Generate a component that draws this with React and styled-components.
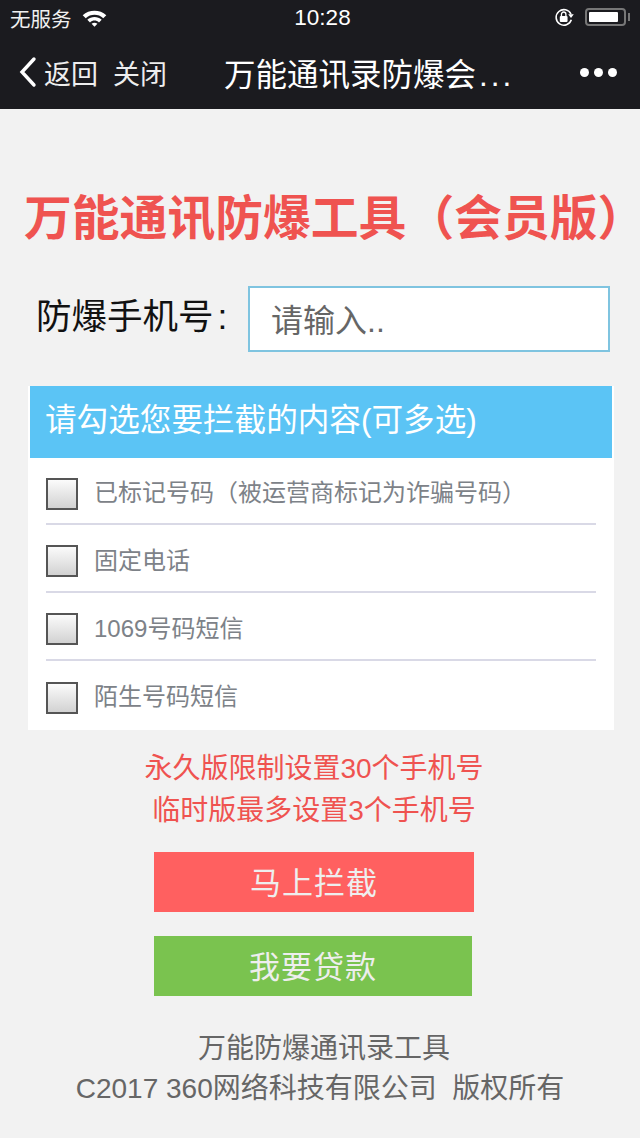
import React from "react";
import styled, { createGlobalStyle } from "styled-components";

const GlobalStyle = createGlobalStyle`
  html, body {
    margin: 0;
    padding: 0;
    background: #f2f2f2;
  }
  body {
    font-family: "Liberation Sans", "Noto Sans CJK SC", sans-serif;
  }
`;

const options = [
  "已标记号码（被运营商标记为诈骗号码）",
  "固定电话",
  "1069号码短信",
  "陌生号码短信",
];

const App = () => {
  return (
    <Page>
      <GlobalStyle />
      <Header>
        <StatusBar>
          <StatusLeft>
            无服务
            <svg width="25" height="18" viewBox="0 0 22 16">
              <path d="M.5 5.5C6.2 .2 15.8 .2 21.5 5.5L18.8 8.2C14.5 4.2 7.5 4.2 3.2 8.2Z" fill="#fff" />
              <path d="M4.6 9.5C8.2 6.2 13.8 6.2 17.4 9.5L15 11.9C12.6 9.8 9.4 9.8 7 11.9Z" fill="#fff" />
              <path d="M8.4 13.1C10 11.9 12 11.9 13.6 13.1L11 15.8Z" fill="#fff" />
            </svg>
          </StatusLeft>
          <Clock>10:28</Clock>
          <StatusRight>
            <svg width="20" height="20" viewBox="0 0 18 18">
              <path d="M15.3 6.5A7 7 0 1 0 15.6 11.5" fill="none" stroke="#fff" strokeWidth="1.4" />
              <path d="M12.8 6.5H17.8L15.3 10Z" fill="#fff" />
              <rect x="5.2" y="8" width="7" height="5.5" rx="1" fill="#fff" />
              <path d="M6.7 8V6.5A2 2 0 0 1 10.7 6.5V8" fill="none" stroke="#fff" strokeWidth="1.2" />
            </svg>
            <Battery>
              <BatteryFill />
            </Battery>
          </StatusRight>
        </StatusBar>
        <NavBar>
          <NavLeft>
            <svg width="20" height="32" viewBox="0 0 20 32">
              <path d="M16 3L4 16L16 29" fill="none" stroke="#fff" strokeWidth="3.4" strokeLinecap="round" />
            </svg>
            <NavLink>返回</NavLink>
            <CloseLink>关闭</CloseLink>
          </NavLeft>
          <NavTitle>
            万能通讯录防爆会<Ellipsis>...</Ellipsis>
          </NavTitle>
          <Dots>
            <Dot />
            <Dot />
            <Dot />
          </Dots>
        </NavBar>
      </Header>

      <Content>
        <Title>
          万能通讯防爆工具（会员版<TitleEnd>）</TitleEnd>
        </Title>
        <PhoneRow>
          <PhoneLabel>
            防爆手机号<Colon>:</Colon>
          </PhoneLabel>
          <PhoneInput placeholder="请输入.." />
        </PhoneRow>

        <Panel>
          <PanelHead>请勾选您要拦截的内容(可多选)</PanelHead>
          <OptionList>
            {options.map((text) => (
              <Option key={text}>
                <Check />
                <OptionText>{text}</OptionText>
              </Option>
            ))}
          </OptionList>
        </Panel>

        <Notice>
          永久版限制设置30个手机号
          <br />
          临时版最多设置3个手机号
        </Notice>

        <ActionButton $bg="#ff6060" $width={320}>马上拦截</ActionButton>
        <ActionButton $bg="#7ac34f" $width={318}>我要贷款</ActionButton>

        <Footer>
          <FooterLine $shift={8}>万能防爆通讯录工具</FooterLine>
          <FooterLine>C2017 360网络科技有限公司&nbsp;&nbsp;版权所有</FooterLine>
        </Footer>
      </Content>
    </Page>
  );
};

const Page = styled.div`
  width: 640px;
  height: 1138px;
  overflow: hidden;
  background: #f2f2f2;
`;

const Header = styled.header`
  height: 109px;
  background: #1b1b1f;
  color: #fff;
`;

const StatusBar = styled.div`
  height: 36px;
  padding: 0 10px;
  display: grid;
  grid-template-columns: 1fr auto 1fr;
  align-items: center;
  font-size: 20.5px;
`;

const StatusLeft = styled.div`
  display: flex;
  align-items: center;
  gap: 10px;
  color: #f0f0f0;
`;

const Clock = styled.div`
  font-size: 22.5px;
  margin-left: 5px;
`;

const StatusRight = styled.div`
  display: flex;
  justify-content: flex-end;
  align-items: center;
  gap: 11px;
  padding: 0 4px 2px 0;
`;

const Battery = styled.div`
  position: relative;
  width: 41px;
  height: 18px;
  box-sizing: border-box;
  padding: 2px;
  border: 2px solid #777;
  border-radius: 4px;

  &::after {
    content: "";
    position: absolute;
    right: -6px;
    top: 3px;
    width: 2px;
    height: 8px;
    background: #777;
  }
`;

const BatteryFill = styled.div`
  width: 29px;
  height: 100%;
  background: #fff;
  border-radius: 1px;
`;

const NavBar = styled.div`
  height: 72px;
  padding: 0 23px 0 18px;
  display: flex;
  align-items: center;
`;

const NavLeft = styled.div`
  width: 206px;
  display: flex;
  align-items: center;
  font-size: 27px;
  color: #eee;
`;

const NavLink = styled.span`
  margin-left: 6px;
`;

const CloseLink = styled.span`
  margin-left: 15px;
`;

const NavTitle = styled.div`
  flex: 1;
  font-size: 31.5px;
  white-space: nowrap;
`;

const Ellipsis = styled.span`
  letter-spacing: 3px;
  margin-left: 3px;
`;

const Dots = styled.div`
  display: flex;
  gap: 5px;
`;

const Dot = styled.span`
  width: 9px;
  height: 9px;
  border-radius: 50%;
  background: #fff;
`;

const Content = styled.main`
  display: flex;
  flex-direction: column;
  align-items: center;
`;

const Title = styled.h1`
  margin: 82px 0 0;
  width: 640px;
  box-sizing: border-box;
  padding-left: 24px;
  font-size: 47.8px;
  line-height: 56px;
  font-weight: 700;
  color: #ef5350;
  white-space: nowrap;
`;

const TitleEnd = styled.span`
  font-feature-settings: "halt";
`;

const PhoneRow = styled.div`
  width: 640px;
  box-sizing: border-box;
  margin-top: 39px;
  padding: 0 30px 0 36px;
  display: flex;
  justify-content: space-between;
  align-items: center;
`;

const PhoneLabel = styled.label`
  font-size: 35.5px;
  color: #111;
  white-space: nowrap;
  margin-top: -12px;
`;

const Colon = styled.span`
  margin-left: 4px;
`;

const PhoneInput = styled.input`
  width: 362px;
  height: 66px;
  box-sizing: border-box;
  padding: 4px 21px 0;
  border: 2px solid #7fc4e0;
  background: #fff;
  font: 32px "Liberation Sans", "Noto Sans CJK SC", sans-serif;
  outline: none;

  &::placeholder {
    color: #666;
    opacity: 1;
  }
`;

const Panel = styled.section`
  width: 586px;
  margin-top: 34px;
  margin-left: 2px;
  background: #fff;
`;

const PanelHead = styled.div`
  height: 72px;
  margin: 0 2px;
  box-sizing: border-box;
  padding-left: 15px;
  background: #5bc4f5;
  color: #fff;
  font-size: 31.6px;
  line-height: 68px;
  white-space: nowrap;
`;

const OptionList = styled.ul`
  list-style: none;
  margin: 0;
  padding: 0 18px;
`;

const Option = styled.li`
  height: 68px;
  box-sizing: border-box;
  display: flex;
  align-items: center;
  gap: 16px;
  border-bottom: 2px solid #d9d9e6;

  &:first-child {
    height: 67px;
  }

  &:last-child {
    height: 69px;
    padding-bottom: 2px;
    border-bottom: 0;
  }
`;

const Check = styled.span`
  width: 32px;
  height: 32px;
  flex: none;
  margin-top: 6px;
  box-sizing: border-box;
  border: 2px solid #555;
  background: linear-gradient(#fbfbfb, #d2d2d2);
`;

const OptionText = styled.span`
  font-size: 24px;
  color: #7d8288;
  white-space: nowrap;
`;

const Notice = styled.p`
  margin: 18px 0 0 -12px;
  text-align: center;
  font-size: 28px;
  line-height: 42px;
  color: #ef5350;
`;

const ActionButton = styled.button`
  display: block;
  align-self: flex-start;
  width: ${(p) => p.$width}px;
  height: 60px;
  margin: 20px 0 4px 154px;
  padding: 0 0 4px;
  border: 0;
  background: ${(p) => p.$bg};
  color: #eee;
  font: 31px "Liberation Sans", "Noto Sans CJK SC", sans-serif;
  letter-spacing: 1px;
`;

const Footer = styled.footer`
  margin-top: 29px;
  text-align: center;
  font-size: 28px;
  line-height: 40px;
  color: #666;
  white-space: nowrap;
`;

const FooterLine = styled.div`
  margin-left: ${(p) => p.$shift || 0}px;
`;

export default App;
